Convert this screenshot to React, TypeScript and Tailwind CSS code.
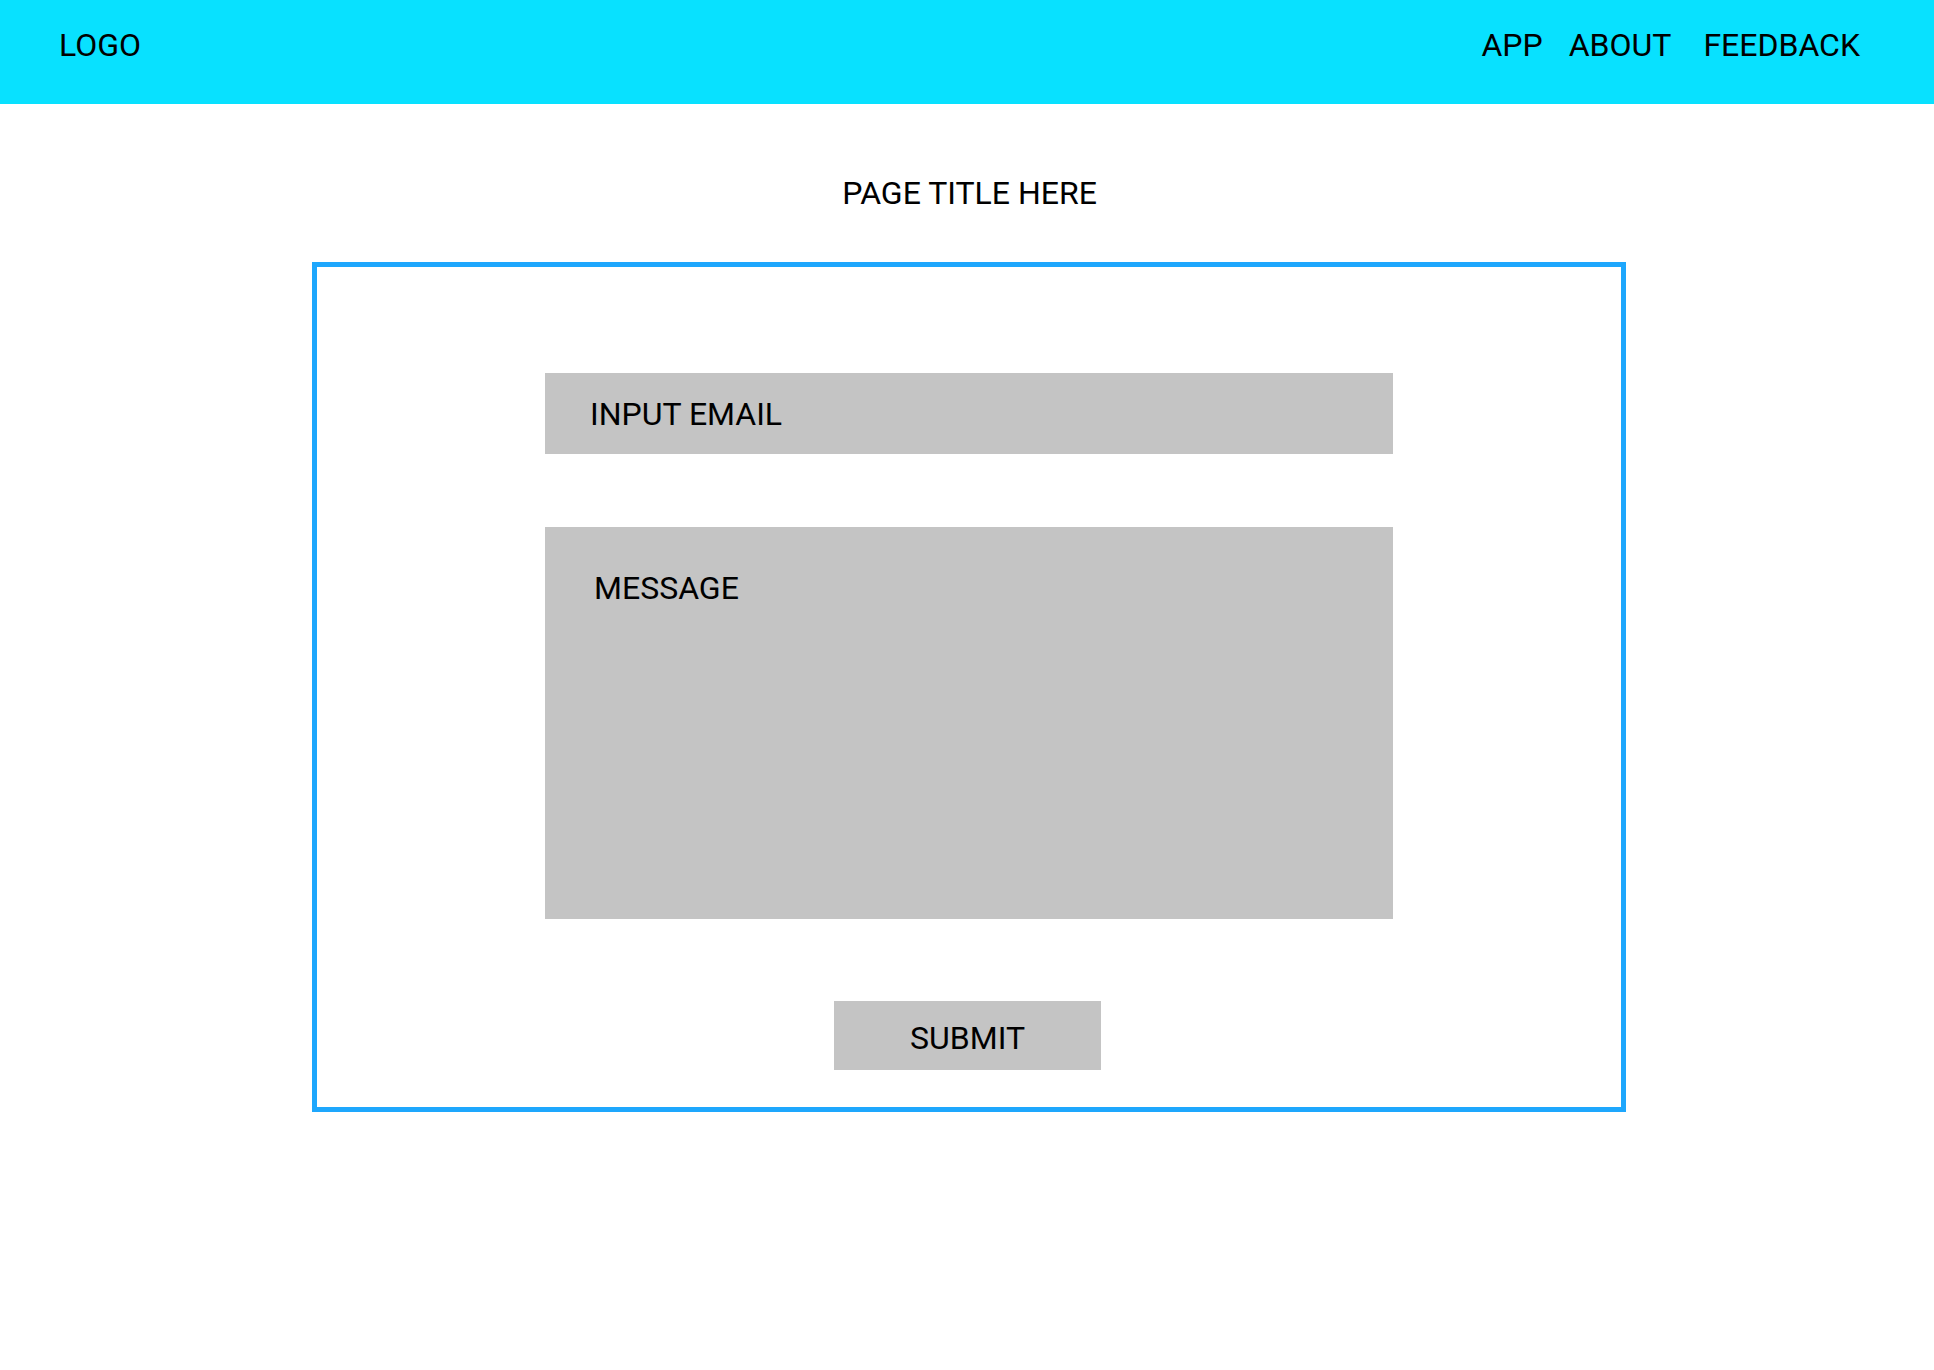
export default function App() {
  return (
    <div className="min-h-[1370px] bg-white text-black" style={{ fontFamily: 'Roboto, "Noto Sans", sans-serif' }}>
      <header className="flex h-[104px] items-start justify-between bg-[#08e1ff] pl-[59px] pr-[74px] pt-[26px] text-[32px] leading-[38px]">
        <div>LOGO</div>
        <nav className="flex">
          <a>APP</a>
          <a className="ml-[26px]">ABOUT</a>
          <a className="ml-[32px]">FEEDBACK</a>
        </nav>
      </header>

      <main className="flex flex-col items-center">
        <h1 className="ml-[5px] mt-[70px] text-[32px] leading-[38px]">PAGE TITLE HERE</h1>

        <form className="ml-[4px] mt-[50px] flex h-[850px] w-[1314px] flex-col items-center border-[5px] border-[#1ea7fd] pt-[106px]">
          <div className="flex h-[81px] w-[848px] items-center bg-[#c4c4c4] pl-[45px] text-[32px] leading-[38px]">
            INPUT EMAIL
          </div>
          <div className="mt-[73px] h-[392px] w-[848px] bg-[#c4c4c4] pl-[49px] pt-[42px] text-[32px] leading-[38px]">
            MESSAGE
          </div>
          <button
            type="button"
            className="mr-[3px] mt-[82px] flex h-[69px] w-[267px] items-center justify-center bg-[#c4c4c4] pt-[4px] text-[32px] leading-[38px]"
          >
            SUBMIT
          </button>
        </form>
      </main>
    </div>
  );
}
